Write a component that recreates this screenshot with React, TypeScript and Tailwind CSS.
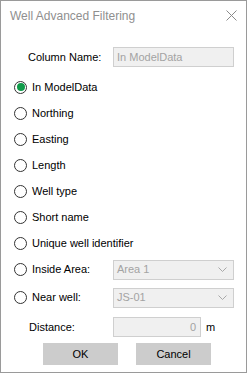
import React from "react";

const options = [
  "In ModelData",
  "Northing",
  "Easting",
  "Length",
  "Well type",
  "Short name",
  "Unique well identifier",
];

function Radio({ checked }: { checked?: boolean }) {
  return (
    <span className="w-[13px] h-[13px] rounded-full border border-[#333] bg-white flex items-center justify-center shrink-0">
      {checked && <span className="w-[8px] h-[8px] rounded-full bg-[#0f9b4a]" />}
    </span>
  );
}

function Chevron() {
  return (
    <svg width="9" height="5" viewBox="0 0 9 5" className="shrink-0">
      <path d="M0.5 0.5 L4.5 4.5 L8.5 0.5" fill="none" stroke="#a8a8a8" strokeWidth="1" />
    </svg>
  );
}

function Select({ value }: { value: string }) {
  return (
    <div className="w-[121px] h-[20px] border border-[#cfcfcf] bg-[#f0f0f0] flex items-center justify-between pl-[3px] pr-[6px] text-[#a3a3a3]">
      <span>{value}</span>
      <Chevron />
    </div>
  );
}

export default function App() {
  return (
    <div className="w-[247px] h-[373px] border border-[#9a9a9a] bg-white flex flex-col text-[11px] text-black font-['Liberation_Sans',Arial,sans-serif]">
      {/* Title bar */}
      <div className="h-[29px] flex items-center justify-between pl-[9px] pr-[9px] text-[12px] text-[#8f8f8f]">
        <span>Well Advanced Filtering</span>
        <svg width="11" height="11" viewBox="0 0 11 11">
          <path d="M0.5 0.5 L10.5 10.5 M10.5 0.5 L0.5 10.5" stroke="#8a8a8a" strokeWidth="1" />
        </svg>
      </div>

      {/* Column name */}
      <div className="flex items-center mt-[17px] h-[20px]">
        <span className="w-[112px] pl-[27px]">Column Name:</span>
        <div className="w-[121px] h-[20px] border border-[#cfcfcf] bg-[#f0f0f0] flex items-center pl-[3px] text-[#a3a3a3]">
          In ModelData
        </div>
      </div>

      {/* Radios */}
      <div className="flex flex-col mt-[7px]">
        {options.map((o, i) => (
          <div key={o} className="h-[26px] flex items-center pl-[13px] gap-[5px]">
            <Radio checked={i === 0} />
            <span>{o}</span>
          </div>
        ))}
        <div className="h-[27px] flex items-center">
          <div className="w-[112px] flex items-center pl-[13px] gap-[5px]">
            <Radio />
            <span>Inside Area:</span>
          </div>
          <Select value="Area 1" />
        </div>
        <div className="h-[29px] flex items-center">
          <div className="w-[112px] flex items-center pl-[13px] gap-[5px]">
            <Radio />
            <span>Near well:</span>
          </div>
          <Select value="JS-01" />
        </div>
      </div>

      {/* Distance */}
      <div className="flex items-center mt-[5px] h-[20px]">
        <span className="w-[112px] pl-[28px]">Distance:</span>
        <div className="w-[88px] h-[20px] border border-[#cfcfcf] bg-[#f0f0f0] flex items-center justify-end pr-[4px] text-[#a3a3a3]">
          0
        </div>
        <span className="ml-[5px]">m</span>
      </div>

      {/* Buttons */}
      <div className="flex mt-[6px] pl-[42px] gap-[18px]">
        <button className="w-[75px] h-[22px] bg-[#cccccc] text-[11px]">OK</button>
        <button className="w-[75px] h-[22px] bg-[#cccccc] text-[11px]">Cancel</button>
      </div>
    </div>
  );
}
